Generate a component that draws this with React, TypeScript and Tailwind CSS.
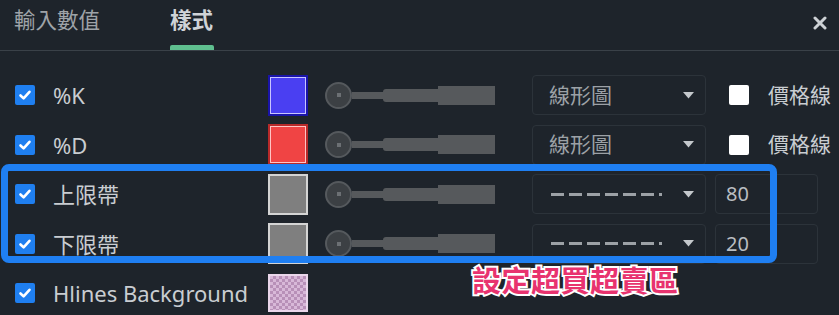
import React from "react";

const font = { fontFamily: '"Noto Sans", "Noto Sans CJK TC", sans-serif' };

function Check({ on }: { on: boolean }) {
  if (!on) return <div className="w-5 h-5 shrink-0 rounded-[2px] bg-white" />;
  return (
    <div className="w-5 h-5 shrink-0 rounded-[2px] bg-[#1f7ff0] flex items-center justify-center">
      <svg width="14" height="14" viewBox="0 0 14 14">
        <path d="M2.5 7.5 L5.6 10.4 L11.5 3.8" fill="none" stroke="white" strokeWidth="2.6" strokeLinecap="round" strokeLinejoin="round" />
      </svg>
    </div>
  );
}

function Swatch({ kind }: { kind: string }) {
  if (kind === "blue")
    return (
      <div className="w-10 h-[41px] shrink-0 border-2 border-[#1a14a8]">
        <div className="w-full h-full border border-[#c8c4ff] bg-[#4a3ff2]" />
      </div>
    );
  if (kind === "red")
    return (
      <div className="w-10 h-[41px] shrink-0 border-2 border-[#b82a2a]">
        <div className="w-full h-full border border-[#ffc4c4] bg-[#f04444]" />
      </div>
    );
  if (kind === "pink")
    return (
      <div className="w-10 h-[38px] shrink-0 border-2 border-[#ead6ea] bg-[#c9a4c9] bg-[repeating-conic-gradient(#b890b8_0%_25%,#d8b8d8_0%_50%)] bg-[length:6px_6px]" />
    );
  return (
    <div className="w-10 h-[41px] shrink-0 border-2 border-[#d4d4d4] bg-[#7f7f7f]" />
  );
}

function Slider() {
  return (
    <div className="ml-[17px] w-[170px] h-[28px] flex items-center shrink-0">
      <div className="w-[27px] h-[27px] rounded-full border-2 border-[#55595d] bg-[#3c4044] flex items-center justify-center shrink-0">
        <div className="w-[4px] h-[4px] bg-[#6c7074]" />
      </div>
      <div className="w-[31px] h-[7px] bg-[#56595c]" />
      <div className="w-[55px] h-[13px] bg-[#56595c] rounded-l-[3px]" />
      <div className="w-[57px] h-[19px] bg-[#56595c]" />
    </div>
  );
}

function Caret() {
  return (
    <svg width="11" height="7" viewBox="0 0 11 7" className="shrink-0">
      <path d="M0 0 H11 L5.5 6.5 Z" fill="#c4c8cc" />
    </svg>
  );
}

function Select({ dashed }: { dashed?: boolean }) {
  return (
    <div className="ml-[37px] w-[174px] h-10 shrink-0 rounded-[4px] border border-[#2c333a] flex items-center pl-[16px] pr-[11px] justify-between">
      {dashed ? (
        <div className="flex items-center gap-[5px] pl-[2px]">
          {[0, 1, 2, 3, 4, 5].map((i) => (
            <div key={i} className="w-[13px] h-[3px] bg-[#9ca1a6]" />
          ))}
          <div className="w-[3px] h-[3px] bg-[#9ca1a6]" />
        </div>
      ) : (
        <span className="text-[21px] text-[#9ca1a6] leading-none">線形圖</span>
      )}
      <Caret />
    </div>
  );
}

function Row({ label, swatch, mode, value }: { label: string; swatch: string; mode: "line" | "band" | "bg"; value?: string }) {
  return (
    <div className="h-[49.5px] flex items-center pl-[15px]">
      <Check on />
      <div className="ml-[18px] w-[215px] shrink-0 text-[22px] text-[#c9cdd1] leading-none whitespace-nowrap">{label}</div>
      <Swatch kind={swatch} />
      {mode !== "bg" && <Slider />}
      {mode === "line" && (
        <>
          <Select />
          <div className="ml-[23px]">
            <Check on={false} />
          </div>
          <div className="ml-[19px] text-[21px] text-[#c9cdd1] leading-none whitespace-nowrap">價格線</div>
        </>
      )}
      {mode === "band" && (
        <>
          <Select dashed />
          <div className="ml-[9px] w-[103px] h-10 shrink-0 rounded-[4px] border border-[#2c333a] flex items-center pl-[10px] text-[20px] text-[#b9bdc1]">
            {value}
          </div>
        </>
      )}
    </div>
  );
}

export default function App() {
  return (
    <div className="relative w-[839px] h-[315px] overflow-hidden bg-[#1e242b]" style={font}>
      <div className="h-[51px] border-b border-[#3a4148] flex items-stretch relative">
        <div className="pl-[14px] pt-[9px] text-[21.5px] leading-none text-[#9ea3a8]">輸入數值</div>
        <div className="ml-[70px] pt-[9px] flex flex-col items-center relative">
          <div className="text-[21.5px] leading-none font-bold text-[#cfd3d7]">樣式</div>
          <div className="absolute bottom-0 w-[44px] h-[5px] rounded-t-[2px] bg-[#5fbf8f]" />
        </div>
        <div className="ml-auto mr-[12px] pt-[16px]">
          <svg width="14" height="14" viewBox="0 0 14 14">
            <path d="M2 2 L12 12 M12 2 L2 12" stroke="#cdd1d5" strokeWidth="3" strokeLinecap="round" />
          </svg>
        </div>
      </div>
      <div className="pt-[19.5px]">
        <Row label="%K" swatch="blue" mode="line" />
        <Row label="%D" swatch="red" mode="line" />
        <Row label="上限帶" swatch="gray" mode="band" value="80" />
        <Row label="下限帶" swatch="gray" mode="band" value="20" />
        <Row label="Hlines Background" swatch="pink" mode="bg" />
      </div>
      <div className="absolute left-[1px] top-[164px] w-[776px] h-[99px] border-[7px] border-[#1f7ff2] rounded-[8px] pointer-events-none" />
      <div className="absolute left-[472px] top-[266px] text-[29px] font-bold leading-none text-[#e8336f] tracking-[0.5px] [-webkit-text-stroke:4px_white] [paint-order:stroke_fill]">
        設定超買超賣區
      </div>
    </div>
  );
}
